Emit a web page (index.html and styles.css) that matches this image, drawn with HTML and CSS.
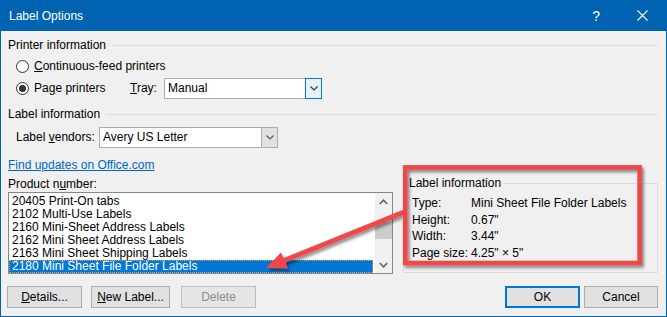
FILE: index.html
```html
<!DOCTYPE html>
<html>
<head>
<meta charset="utf-8">
<link rel="stylesheet" href="styles.css">
</head>
<body>
<div class="window">
  <div class="titlebar">
    <span class="title">Label Options</span>
    <span class="help">?</span>
    <svg class="close" width="11" height="11" viewBox="0 0 11 11"><path d="M0.5 0.5 L10.5 10.5 M10.5 0.5 L0.5 10.5" stroke="#fff" stroke-width="1.1" fill="none"/></svg>
  </div>
  <div class="body">
    <div class="group-head"><span>Printer information</span><span class="rule"></span></div>
    <div class="radio-row first"><span class="radio"></span><span><u>C</u>ontinuous-feed printers</span></div>
    <div class="radio-row"><span class="radio checked"></span><span class="page-label">Pa<u>g</u>e printers</span><span class="tray-label"><u>T</u>ray:</span>
      <div class="select tray"><span class="val">Manual</span><span class="dd focus"><svg width="8" height="5" viewBox="0 0 8 5"><polyline points="0.5,0.5 4,4 7.5,0.5" fill="none" stroke="#333" stroke-width="1.1"/></svg></span></div>
    </div>
    <div class="group-head second"><span>Label information</span><span class="rule"></span></div>
    <div class="vendor-row"><span class="vendor-label">Label <u>v</u>endors:</span>
      <div class="select vendors"><span class="val">Avery US Letter</span><span class="dd"><svg width="8" height="5" viewBox="0 0 8 5"><polyline points="0.5,0.5 4,4 7.5,0.5" fill="none" stroke="#555" stroke-width="1.1"/></svg></span></div>
    </div>
    <div class="lower">
      <div class="left">
        <a class="link">Find updates on Office.com</a>
        <div class="prod-label">Product n<u>u</u>mber:</div>
        <div class="listbox">
          <div class="items">
            <div class="item">20405 Print-On tabs</div>
            <div class="item">2102 Multi-Use Labels</div>
            <div class="item">2160 Mini-Sheet Address Labels</div>
            <div class="item">2162 Mini Sheet Address Labels</div>
            <div class="item">2163 Mini Sheet Shipping Labels</div>
            <div class="item selected">2180 Mini Sheet File Folder Labels</div>
          </div>
          <div class="scrollbar">
            <div class="sb-btn"><svg width="9" height="6" viewBox="0 0 9 6"><polyline points="0.8,5 4.5,1.2 8.2,5" fill="none" stroke="#606060" stroke-width="1.5"/></svg></div>
            <div class="sb-track"><div class="sb-thumb"></div></div>
            <div class="sb-btn"><svg width="9" height="6" viewBox="0 0 9 6"><polyline points="0.8,1 4.5,4.8 8.2,1" fill="none" stroke="#606060" stroke-width="1.5"/></svg></div>
          </div>
        </div>
      </div>
      <div class="right">
        <div class="infobox">
          <div class="info-title">Label information</div>
          <div class="info-rows">
            <div class="info-row"><span class="k">Type:</span><span>Mini Sheet File Folder Labels</span></div>
            <div class="info-row"><span class="k">Height:</span><span>0.67"</span></div>
            <div class="info-row"><span class="k">Width:</span><span>3.44"</span></div>
            <div class="info-row"><span class="k">Page size:</span><span>4.25" × 5"</span></div>
          </div>
        </div>
      </div>
    </div>
    <div class="buttons">
      <div class="btn details"><u>D</u>etails...</div>
      <div class="btn newlabel"><u>N</u>ew Label...</div>
      <div class="btn delete disabled">Delete</div>
      <div class="spacer"></div>
      <div class="btn ok">OK</div>
      <div class="btn cancel">Cancel</div>
    </div>
  </div>
  <svg class="annot" width="667" height="317" viewBox="0 0 667 317">
    <defs>
      <filter id="sh" x="-10%" y="-10%" width="130%" height="140%">
        <feDropShadow dx="2" dy="2.5" stdDeviation="1.6" flood-color="#000" flood-opacity="0.45"/>
      </filter>
    </defs>
    <g filter="url(#sh)">
      <rect x="405.2" y="167.4" width="234.4" height="95.6" fill="none" stroke="#F0474B" stroke-width="4.6"/>
      <line x1="404" y1="212" x2="284" y2="260.5" stroke="#F0474B" stroke-width="5"/>
      <polygon points="266,268 288,268.5 281,252.5" fill="#F0474B"/>
    </g>
  </svg>
</div>
</body>
</html>
```

FILE: styles.css
```css
html, body {
  margin: 0;
  padding: 0;
}
body {
  font-family: "Liberation Sans", Arial, sans-serif;
  font-size: 12px;
  color: #000;
  background: #F0F0F0;
}
.window {
  position: relative;
  width: 667px;
  height: 317px;
  display: flex;
  flex-direction: column;
  background: #F0F0F0;
}
.titlebar {
  height: 31px;
  flex: none;
  background: #0063B1;
  color: #fff;
  display: flex;
  align-items: center;
  padding-left: 9px;
}
.title {
  flex: 1;
  font-size: 12px;
}
.help {
  font-size: 14px;
  margin-right: 37px;
}
.close {
  margin-right: 19px;
  display: block;
}
.body {
  flex: 1;
  border: 1px solid #0063B1;
  border-top: none;
  padding: 0 8px 0 7px;
  display: flex;
  flex-direction: column;
}
.group-head {
  display: flex;
  align-items: center;
  height: 14px;
  line-height: 14px;
  margin-top: 7px;
}
.group-head.second {
  margin-top: 8px;
}
.rule {
  flex: 1;
  height: 1px;
  background: #DCDCDC;
  margin-left: 6px;
}
.radio-row {
  height: 22px;
  display: flex;
  align-items: center;
  padding-left: 8px;
}
.radio-row.first {
  margin-top: 3px;
}
.radio {
  width: 13px;
  height: 13px;
  box-sizing: border-box;
  border: 1px solid #333;
  border-radius: 50%;
  background: #fff;
  margin-right: 5px;
  display: flex;
  align-items: center;
  justify-content: center;
  flex: none;
}
.radio.checked::after {
  content: "";
  width: 7px;
  height: 7px;
  border-radius: 50%;
  background: #333;
}
.page-label {
  width: 96px;
}
.tray-label {
  width: 34px;
}
.select {
  height: 21px;
  box-sizing: border-box;
  border: 1px solid #ADADAD;
  background: #fff;
  display: flex;
  align-items: center;
  padding-left: 3px;
}
.select .val {
  flex: 1;
}
.select.tray {
  width: 158px;
}
.select.vendors {
  width: 179px;
}
.dd {
  width: 17px;
  height: 21px;
  box-sizing: border-box;
  margin: -1px -1px -1px 0;
  border: 1px solid #ADADAD;
  background: #E1E1E1;
  display: flex;
  align-items: center;
  justify-content: center;
}
.dd.focus {
  border-color: #0078D7;
  background: #E5F1FB;
}
.dd svg {
  display: block;
}
.vendor-row {
  height: 22px;
  margin-top: 5px;
  display: flex;
  align-items: center;
  padding-left: 8px;
}
.vendor-label {
  width: 83px;
}
.lower {
  display: flex;
  margin-top: 10px;
}
.left {
  width: 385px;
  flex: none;
}
.link {
  display: block;
  line-height: 14px;
  color: #0066CC;
  text-decoration: underline;
}
.prod-label {
  line-height: 14px;
  margin-top: 5px;
}
.listbox {
  margin-top: 1px;
  height: 82px;
  box-sizing: border-box;
  border: 1px solid #828790;
  background: #fff;
  display: flex;
}
.items {
  flex: 1;
  padding: 2px 2px 0 0;
}
.item {
  height: 13px;
  line-height: 13px;
  padding-left: 3px;
  white-space: nowrap;
}
.item.selected {
  background: #0078D7;
  color: #fff;
  outline: 1px dotted #E7A24A;
  outline-offset: -1px;
}
.scrollbar {
  width: 17px;
  background: #F0F0F0;
  display: flex;
  flex-direction: column;
}
.sb-btn {
  height: 17px;
  display: flex;
  align-items: center;
  justify-content: center;
}
.sb-track {
  flex: 1;
}
.sb-thumb {
  margin-top: 12px;
  height: 17px;
  background: #CDCDCD;
}
.right {
  margin-left: 10px;
  width: 255px;
  flex: none;
}
.infobox {
  margin-top: 25px;
  height: 90px;
  box-sizing: border-box;
  border: 1px solid #DCDCDC;
  display: flex;
  flex-direction: column;
  align-items: flex-start;
}
.info-title {
  margin: -8px 0 0 3px;
  padding: 0 2px;
  line-height: 14px;
  height: 14px;
  background: #F0F0F0;
}
.info-rows {
  align-self: stretch;
  margin-top: 5px;
  padding-left: 8px;
}
.info-row {
  display: flex;
  height: 16.5px;
  line-height: 16.5px;
}
.k {
  width: 59px;
}
.buttons {
  display: flex;
  margin-top: 12px;
  margin-left: -1px;
  height: 22px;
}
.btn {
  height: 22px;
  box-sizing: border-box;
  border: 1px solid #ADADAD;
  background: #E1E1E1;
  display: flex;
  align-items: center;
  justify-content: center;
}
.details { width: 75px; }
.newlabel { width: 79px; margin-left: 9px; }
.delete { width: 75px; margin-left: 11px; }
.disabled {
  color: #8C8C8C;
  border-color: #BFBFBF;
  background: #E6E6E6;
}
.spacer { flex: 1; }
.ok {
  width: 75px;
  margin-right: 4px;
  border: 2px solid #0078D7;
}
.cancel { width: 74px; }
.annot {
  position: absolute;
  left: 0;
  top: 0;
  pointer-events: none;
}
```
